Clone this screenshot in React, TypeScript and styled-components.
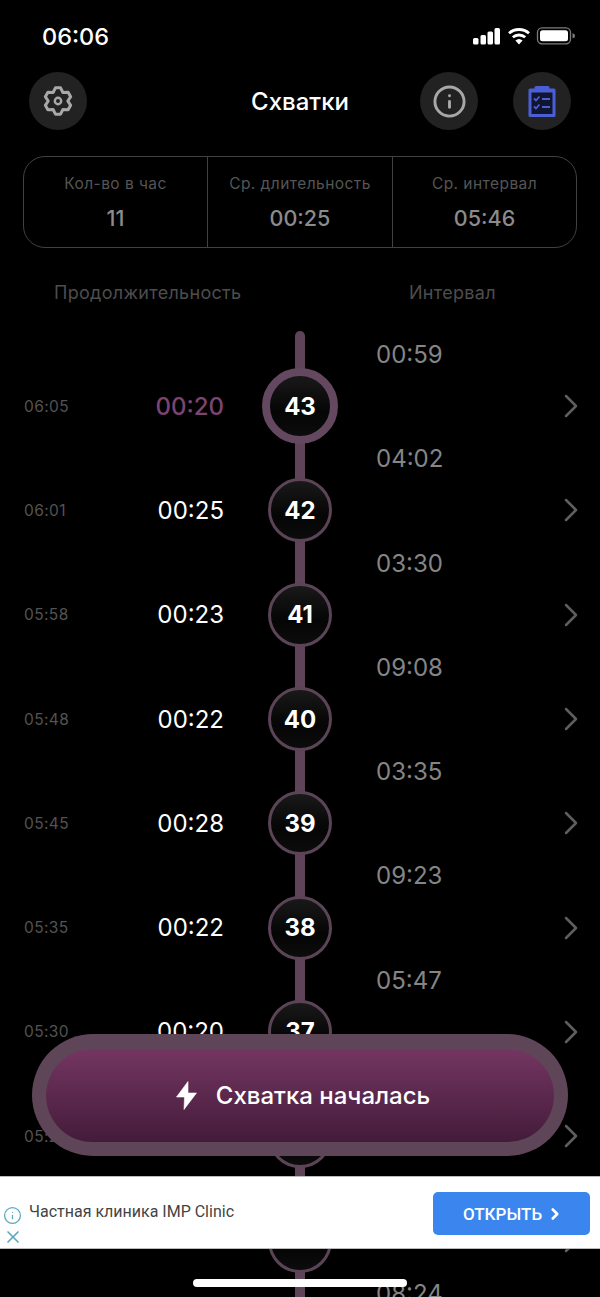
import React from 'react';
import styled, { createGlobalStyle } from 'styled-components';
import { Info, ChevronRight, X } from 'lucide-react';

const Global = createGlobalStyle`
  html, body { margin: 0; padding: 0; background: #000; }
  body { font-family: Inter, "Liberation Sans", sans-serif; }
`;

const Screen = styled.div`
  position: relative;
  width: 600px;
  height: 1297px;
  overflow: hidden;
  background: #000;
  color: #fff;
`;

const StatusBar = styled.div`
  height: 72px;
  box-sizing: border-box;
  padding: 23px 25px 0 42px;
  display: flex;
  justify-content: space-between;
  align-items: flex-start;
`;

const Clock = styled.div`
  font-size: 23.5px;
  line-height: 28px;
  font-weight: 500;
`;

const StatusIcons = styled.svg`
  width: 103px;
  height: 20px;
  margin-top: 4px;
`;

const Header = styled.header`
  height: 58px;
  box-sizing: border-box;
  padding: 0 29px;
  display: grid;
  grid-template-columns: 58px 1fr 58px 35px 58px;
  align-items: center;
`;

const RoundButton = styled.div<{ $col: number }>`
  grid-column: ${p => p.$col};
  grid-row: 1;
  width: 58px;
  height: 58px;
  border-radius: 50%;
  background: #222;
  color: #a8a8a8;
  display: flex;
  align-items: center;
  justify-content: center;
`;

const Title = styled.h1`
  grid-column: 2;
  grid-row: 1;
  margin: 0;
  padding-left: 93px;
  text-align: center;
  font-size: 24px;
  font-weight: 500;
  color: #fff;
`;

const Stats = styled.section`
  margin: 26px 23px 0;
  height: 92px;
  box-sizing: border-box;
  border: 1.5px solid #414141;
  border-radius: 22px;
  display: grid;
  grid-template-columns: 183px 185px 1fr;
`;

const Stat = styled.div<{ $divider?: boolean }>`
  display: flex;
  flex-direction: column;
  align-items: center;
  padding-top: 17px;
  border-left: ${p => (p.$divider ? '1px solid #414141' : 'none')};
`;

const StatLabel = styled.div`
  font-size: 15.5px;
  line-height: 20px;
  letter-spacing: 0.45px;
  color: #555;
`;

const StatValue = styled.div`
  margin-top: 11px;
  font-size: 21.5px;
  line-height: 26px;
  font-weight: 500;
  color: #8b8b8b;
`;

const Columns = styled.div`
  height: 30px;
  margin-top: 30px;
  display: flex;
  padding-left: 54px;
  font-size: 18px;
  line-height: 30px;
  letter-spacing: 0.3px;
  color: #4d4d4d;
`;

const ColumnTitle = styled.div<{ $width: number }>`
  width: ${p => p.$width}px;
  white-space: nowrap;
`;

const Timeline = styled.div`
  position: relative;
  margin-top: 23px;
  padding-top: 23px;
  &::before {
    content: '';
    position: absolute;
    top: 0;
    bottom: 0;
    left: 295px;
    width: 10px;
    border-radius: 5px;
    background: #5f4359;
  }
`;

const Row = styled.div`
  position: relative;
  height: 104.3px;
  display: grid;
  grid-template-columns: 91px 109px 38px 76px 38px 1fr 40px;
  padding: 0 9px 0 24px;
  align-items: center;
`;

const Time = styled.div`
  grid-column: 1;
  font-size: 15.5px;
  letter-spacing: 0.4px;
  color: #535353;
`;

const Duration = styled.div<{ $active?: boolean }>`
  grid-column: 2;
  text-align: right;
  font-size: 24px;
  color: ${p => (p.$active ? '#7b4571' : '#fff')};
  font-weight: ${p => (p.$active ? 500 : 400)};
`;

const NodeSlot = styled.div`
  grid-column: 4;
  display: flex;
  align-items: center;
  justify-content: center;
`;

const Node = styled.div<{ $active?: boolean }>`
  box-sizing: border-box;
  width: ${p => (p.$active ? 76 : 64)}px;
  height: ${p => (p.$active ? 76 : 64)}px;
  border-radius: 50%;
  border: ${p => (p.$active ? '8px solid #64485f' : '3px solid #5b4456')};
  background: linear-gradient(180deg, #191919 0%, #050505 60%, #0c0c0c 100%);
  display: flex;
  align-items: center;
  justify-content: center;
  font-size: 24px;
  font-weight: 700;
  position: relative;
  z-index: 1;
`;

const IntervalValue = styled.div`
  grid-column: 6;
  align-self: start;
  margin-top: -15px;
  height: 32px;
  line-height: 32px;
  font-size: 24px;
  color: #858585;
`;

const Chevron = styled(ChevronRight)`
  grid-column: 7;
  color: #5f5f5f;
`;

const StartOuter = styled.div`
  position: absolute;
  z-index: 2;
  left: 32px;
  top: 1034px;
  width: 536px;
  height: 122px;
  box-sizing: border-box;
  padding: 15px 14px 14px;
  border-radius: 61px;
  background: #5e4658;
`;

const StartInner = styled.button`
  width: 100%;
  height: 100%;
  border: none;
  border-radius: 47px;
  background: linear-gradient(180deg, #733661 0%, #441b3a 100%);
  color: #fff;
  font-family: inherit;
  font-size: 24px;
  font-weight: 500;
  display: flex;
  align-items: center;
  justify-content: center;
  gap: 19px;
  padding: 0 0 0 6px;
`;

const Ad = styled.aside`
  position: absolute;
  z-index: 2;
  left: 0;
  right: 0;
  top: 1176px;
  height: 73px;
  box-sizing: border-box;
  background: #fff;
  border-top: 1px solid #bbb;
  border-bottom: 1px solid #bbb;
  display: flex;
  align-items: flex-start;
  padding: 15px 10px 0 0;
`;

const AdIcons = styled.div`
  width: 29px;
  height: 100%;
  display: flex;
  flex-direction: column;
  align-items: center;
  padding: 14px 4px 0 0;
  box-sizing: border-box;
  gap: 2px;
  color: #5ba9bd;
`;

const AdText = styled.div`
  flex: 1;
  font-size: 16px;
  line-height: 22px;
  margin-top: 9px;
  color: #444;
  font-family: Roboto, sans-serif;
`;

const OpenButton = styled.div`
  width: 157px;
  height: 43px;
  border-radius: 5px;
  background: #3b86ee;
  color: #fff;
  font-family: Roboto, sans-serif;
  font-size: 17px;
  font-weight: 500;
  display: flex;
  align-items: center;
  justify-content: center;
  gap: 4px;
  padding-left: 4px;
  box-sizing: border-box;
`;

const HomeBar = styled.div`
  position: absolute;
  z-index: 3;
  left: 193px;
  top: 1279px;
  width: 214px;
  height: 8px;
  border-radius: 4px;
  background: #fff;
`;

const rows = [
  ['06:05', '00:20', 43, '00:59'],
  ['06:01', '00:25', 42, '04:02'],
  ['05:58', '00:23', 41, '03:30'],
  ['05:48', '00:22', 40, '09:08'],
  ['05:45', '00:28', 39, '03:35'],
  ['05:35', '00:22', 38, '09:23'],
  ['05:30', '00:20', 37, '05:47'],
  ['05:20', '00:21', 36, '04:40'],
  ['05:15', '00:19', 35, '08:16'],
  ['05:06', '00:24', 34, '08:24'],
] as const;

const polar = (r: number, deg: number) => {
  const a = (deg * Math.PI) / 180;
  return `${(16 + r * Math.cos(a)).toFixed(2)} ${(16 + r * Math.sin(a)).toFixed(2)}`;
};

const gearPath = (() => {
  let d = `M${polar(9.8, -120)}`;
  for (let i = 0; i < 6; i++) {
    const peak = -90 + i * 60;
    d += ` L${polar(13.4, peak - 11)} L${polar(13.4, peak + 11)} L${polar(9.8, peak + 30)}`;
  }
  return `${d}Z`;
})();

const Gear = () => (
  <svg width="32" height="32" viewBox="0 0 32 32" fill="none" stroke="#a8a8a8">
    <path d={gearPath} strokeWidth="3" strokeLinejoin="round" />
    <circle cx="16" cy="16" r="3.200" strokeWidth="2.400" />
  </svg>
);

const Clipboard = () => (
  <svg width="28" height="31" viewBox="0 0 28 31">
    <path fill="#4a5fd6" d="M8 0h12a1.5 1.5 0 0 1 1.5 1.5V2.5H26a1.5 1.5 0 0 1 1.5 1.5v25.5A1.5 1.5 0 0 1 26 31H2A1.5 1.5 0 0 1 .5 29.5V4A1.5 1.5 0 0 1 2 2.5h4.500V1.500A1.500 1.500 0 0 1 8 0Z" />
    <path fill="#12152e" d="M3.500 6.500h21v21.500h-21z" />
    <path fill="none" stroke="#4a5fd6" strokeWidth="1.800" d="M6 12.500l2 2 3.500-4M6 20.500l2 2 3.500-4M14 13h8M14 21h8" />
  </svg>
);

const Bolt = () => (
  <svg width="21" height="29" viewBox="0 0 21 29">
    <path fill="#fff" stroke="#fff" strokeWidth="0.600" strokeLinejoin="round" d="M12 0.500 0.500 16h8L8 28.500 20.500 12H12z" />
  </svg>
);

export default function App() {
  return (
    <Screen>
      <Global />
      <StatusBar>
        <Clock>06:06</Clock>
        <StatusIcons viewBox="0 0 103 20">
          <g fill="#fff">
            <rect x="1" y="11" width="5.500" height="6.500" rx="1.500" />
            <rect x="8.500" y="8" width="5.500" height="9.500" rx="1.500" />
            <rect x="15.500" y="4.500" width="5.500" height="13" rx="1.500" />
            <rect x="22.500" y="1" width="5.500" height="16.500" rx="1.500" />
            <path d="M47 17.500l-3.600-4a5.500 5.500 0 0 1 7.200 0z" />
          </g>
          <path fill="none" stroke="#fff" strokeWidth="2.800" d="M40.800 10.300a9.500 9.500 0 0 1 12.400 0M37 6.300a15 15 0 0 1 20 0" />
          <rect x="65.500" y="0.800" width="33" height="16" rx="4.500" fill="none" stroke="#7c7c7c" strokeWidth="1.300" />
          <rect x="68" y="3.300" width="28" height="11" rx="2.500" fill="#fff" />
          <path d="M100.500 6.300v5a2.500 2.500 0 0 0 0-5z" fill="#7c7c7c" />
        </StatusIcons>
      </StatusBar>

      <Header>
        <RoundButton $col={1}><Gear /></RoundButton>
        <Title>Схватки</Title>
        <RoundButton $col={3}><Info size={35} strokeWidth={2} /></RoundButton>
        <RoundButton $col={5}><Clipboard /></RoundButton>
      </Header>

      <Stats>
        <Stat><StatLabel>Кол-во в час</StatLabel><StatValue>11</StatValue></Stat>
        <Stat $divider><StatLabel>Ср. длительность</StatLabel><StatValue>00:25</StatValue></Stat>
        <Stat $divider><StatLabel>Ср. интервал</StatLabel><StatValue>05:46</StatValue></Stat>
      </Stats>

      <Columns>
        <ColumnTitle $width={355}>Продолжительность</ColumnTitle>
        <ColumnTitle $width={100}>Интервал</ColumnTitle>
      </Columns>

      <Timeline>
        {rows.map(([time, duration, n, interval], i) => (
          <Row key={n}>
            <Time>{time}</Time>
            <Duration $active={i === 0}>{duration}</Duration>
            <NodeSlot><Node $active={i === 0}>{n}</Node></NodeSlot>
            <IntervalValue>{interval}</IntervalValue>
            <Chevron size={40} strokeWidth={1.5} />
          </Row>
        ))}
      </Timeline>

      <StartOuter>
        <StartInner><Bolt />Схватка началась</StartInner>
      </StartOuter>

      <Ad>
        <AdIcons>
          <Info size={19} strokeWidth={1.6} />
          <X size={20} strokeWidth={2} />
        </AdIcons>
        <AdText>Частная клиника IMP Clinic</AdText>
        <OpenButton>ОТКРЫТЬ<ChevronRight size={18} strokeWidth={3.5} /></OpenButton>
      </Ad>

      <HomeBar />
    </Screen>
  );
}
